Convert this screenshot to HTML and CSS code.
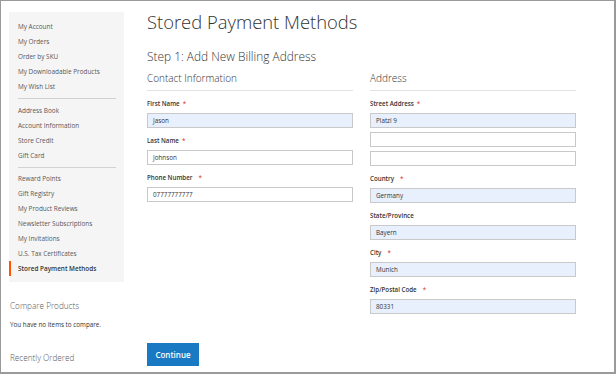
FILE: index.html
```html
<!DOCTYPE html>
<html>
<head>
<meta charset="utf-8">
<link rel="stylesheet" href="styles.css">
</head>
<body>
<div class="frame">
  <aside class="sidebar">
    <nav class="nav">
      <a class="item">My Account</a>
      <a class="item">My Orders</a>
      <a class="item">Order by SKU</a>
      <a class="item">My Downloadable Products</a>
      <a class="item">My Wish List</a>
      <div class="divider"></div>
      <a class="item">Address Book</a>
      <a class="item">Account Information</a>
      <a class="item">Store Credit</a>
      <a class="item">Gift Card</a>
      <div class="divider"></div>
      <a class="item">Reward Points</a>
      <a class="item">Gift Registry</a>
      <a class="item">My Product Reviews</a>
      <a class="item">Newsletter Subscriptions</a>
      <a class="item">My Invitations</a>
      <a class="item">U.S. Tax Certificates</a>
      <a class="item current">Stored Payment Methods</a>
    </nav>
    <div class="block-title compare">Compare Products</div>
    <div class="block-text">You have no items to compare.</div>
    <div class="block-title recent">Recently Ordered</div>
  </aside>
  <main class="main">
    <h1 class="title">Stored Payment Methods</h1>
    <h2 class="step">Step 1: Add New Billing Address</h2>
    <div class="columns">
      <section class="fieldset">
        <div class="legend">Contact Information</div>
        <div class="field">
          <label class="label">First Name<span class="req">*</span></label>
          <div class="input filled">Jason</div>
        </div>
        <div class="field">
          <label class="label">Last Name<span class="req">*</span></label>
          <div class="input">Johnson</div>
        </div>
        <div class="field">
          <label class="label">Phone Number<span class="req wide">*</span></label>
          <div class="input">07777777777</div>
        </div>
      </section>
      <section class="fieldset">
        <div class="legend">Address</div>
        <div class="field">
          <label class="label">Street Address<span class="req">*</span></label>
          <div class="input filled">Platzl 9</div>
          <div class="input extra"></div>
          <div class="input extra"></div>
        </div>
        <div class="field">
          <label class="label">Country<span class="req wide">*</span></label>
          <div class="input filled">Germany</div>
        </div>
        <div class="field">
          <label class="label">State/Province</label>
          <div class="input filled">Bayern</div>
        </div>
        <div class="field">
          <label class="label">City<span class="req wide">*</span></label>
          <div class="input filled">Munich</div>
        </div>
        <div class="field">
          <label class="label">Zip/Postal Code<span class="req wide">*</span></label>
          <div class="input filled">80331</div>
        </div>
      </section>
    </div>
    <button class="btn">Continue</button>
  </main>
</div>
</body>
</html>
```
FILE: styles.css
```css
* { box-sizing: border-box; }
html, body { margin: 0; padding: 0; background: #fff; }
body { font-family: "Open Sans", "Liberation Sans", sans-serif; color: #333; }

.frame {
  width: 616px;
  height: 374px;
  border-top: 1px solid #9a9a9a;
  border-left: 1px solid #9a9a9a;
  border-right: 2px solid #9a9a9a;
  border-bottom: 2px solid #9a9a9a;
  display: flex;
  align-items: flex-start;
  padding: 11px 0 0 8px;
  overflow: hidden;
}

.sidebar { width: 115px; flex: none; }
.nav {
  background: #f5f5f5;
  padding: 7px 0 6px 0;
  display: flex;
  flex-direction: column;
}
.item {
  display: block;
  font-size: 6.4px;
  line-height: 15px;
  height: 15px;
  color: #575757;
  padding-left: 9px;
  white-space: nowrap;
}
.item.current {
  border-left: 2px solid #ff5501;
  padding-left: 7px;
  font-weight: 600;
  color: #333;
}
.divider {
  height: 1px;
  background: #d1d1d1;
  margin: 4px 8px 3.5px 9px;
}
.block-title {
  font-size: 8.2px;
  line-height: 12px;
  font-weight: 300;
  color: #575757;
  padding-left: 1px;
}
.compare { margin-top: 18px; }
.block-text {
  font-size: 6.3px;
  line-height: 10px;
  margin-top: 8px;
  padding-left: 1px;
  color: #333;
}
.recent { margin-top: 22px; }

.main { margin-left: 23px; width: 429px; flex: none; }
.title {
  margin: -2px 0 0 0;
  font-size: 18.4px;
  line-height: 24px;
  font-weight: 300;
  color: #333;
}
.step {
  margin: 14px 0 0 0;
  font-size: 11.9px;
  line-height: 16px;
  font-weight: 300;
  color: #333;
}
.columns {
  display: grid;
  grid-template-columns: 206px 206px;
  column-gap: 17px;
  margin-top: 8px;
}
.legend {
  font-size: 10px;
  line-height: 13px;
  font-weight: 300;
  color: #333;
  padding-bottom: 5px;
  border-bottom: 1px solid #e3e3e3;
  margin-bottom: 8px;
}
.field { display: flex; flex-direction: column; margin-bottom: 8px; }
.label {
  font-size: 6.2px;
  line-height: 10px;
  height: 10px;
  font-weight: 600;
  color: #333;
  margin-bottom: 4px;
}
.req { color: #e02b27; margin-left: 3px; font-weight: 400; }
.req.wide { margin-left: 6px; }
.input {
  height: 15px;
  border: 1px solid #c9c9c9;
  background: #fff;
  font-size: 6.3px;
  line-height: 13px;
  padding-left: 5px;
  color: #333;
}
.input.filled { background: #e8f0fe; }
.input.extra { margin-top: 4px; }

.btn {
  margin-top: 21px;
  width: 52px;
  height: 23px;
  background: #1979c3;
  border: 1px solid #1979c3;
  color: #fff;
  font-family: "Open Sans", "Liberation Sans", sans-serif;
  font-size: 8px;
  font-weight: 600;
  padding: 0;
  border-radius: 0;
}
```
